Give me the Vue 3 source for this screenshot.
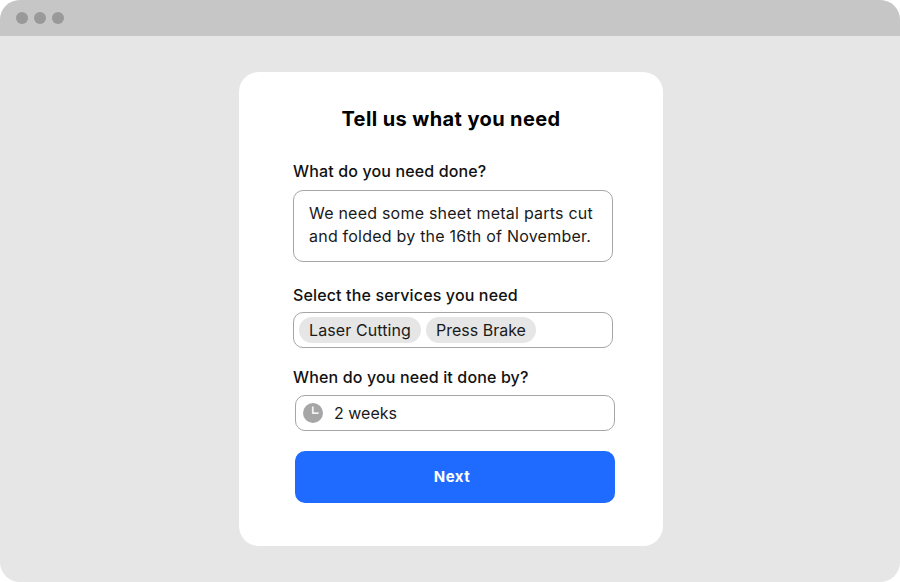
<script setup>
const chips = ['Laser Cutting', 'Press Brake']
</script>

<template>
  <div class="window">
    <header class="bar">
      <span class="dot"></span><span class="dot"></span><span class="dot"></span>
    </header>
    <main class="stage">
      <section class="card">
        <h1 class="title">Tell us what you need</h1>
        <label class="label first">What do you need done?</label>
        <div class="box area">We need some sheet metal parts cut<br />and folded by the 16th of November.</div>
        <label class="label second">Select the services you need</label>
        <div class="box chips">
          <span v-for="c in chips" :key="c" class="chip">{{ c }}</span>
        </div>
        <label class="label third">When do you need it done by?</label>
        <div class="box when">
          <svg class="clock" width="20" height="20" viewBox="0 0 20 20">
            <circle cx="10" cy="10" r="10" fill="#a6a6a6" />
            <path d="M9.8 3.5V10.2H15.6" fill="none" stroke="#f2f2f2" stroke-width="1.8" />
          </svg>
          <span>2 weeks</span>
        </div>
        <button class="next">Next</button>
      </section>
    </main>
  </div>
</template>

<style>
html, body { margin: 0; background: #fff; }
</style>

<style scoped>
.window {
  width: 900px;
  height: 582px;
  border-radius: 20px;
  overflow: hidden;
  background: #e6e6e6;
  font-family: Inter, "Liberation Sans", sans-serif;
  color: #1a1a1a;
}
.bar {
  height: 36px;
  background: #c6c6c6;
  display: flex;
  align-items: center;
  gap: 6px;
  padding-left: 16px;
  box-sizing: border-box;
}
.dot { width: 12px; height: 12px; border-radius: 50%; background: #999; }
.stage { display: flex; padding: 36px 0 0 239px; }
.card {
  width: 424px;
  height: 474px;
  box-sizing: border-box;
  background: #fff;
  border-radius: 20px;
  padding: 34px 0 0 54px;
}
.title {
  margin: 0 0 0 -54px;
  width: 424px;
  text-align: center;
  font-size: 20px;
  line-height: 26px;
  font-weight: 700;
  letter-spacing: 0.4px;
  color: #000;
}
.label {
  display: block;
  font-size: 16px;
  line-height: 20px;
  font-weight: 500;
  letter-spacing: 0.14px;
  color: #111;
}
.first { margin-top: 29px; margin-bottom: 9px; }
.second { margin-top: 23px; margin-bottom: 7px; }
.third { margin-top: 19px; margin-bottom: 8px; }
.box {
  width: 320px;
  box-sizing: border-box;
  border: 1px solid #a6a6a6;
  background: #fff;
  font-size: 16px;
}
.area {
  height: 72px;
  border-radius: 10px;
  padding: 11px 15px;
  line-height: 23px;
  letter-spacing: 0.22px;
}
.chips {
  height: 36px;
  border-radius: 10px;
  display: flex;
  align-items: center;
  gap: 4px;
  padding-left: 5px;
}
.chip {
  height: 26px;
  line-height: 26px;
  border-radius: 13px;
  background: #e6e6e6;
  padding: 0 10px;
  letter-spacing: 0.1px;
}
.chip + .chip { margin-left: 1px; letter-spacing: 0; }
.when {
  height: 36px;
  margin-left: 2px;
  border-radius: 10px;
  display: flex;
  align-items: center;
  gap: 11px;
  padding-left: 7px;
}
.clock { flex: none; }
.next {
  display: block;
  width: 320px;
  height: 52px;
  margin: 20px 0 0 2px;
  padding: 0 6px 2px 0;
  border: 0;
  border-radius: 10px;
  background: #1f6bff;
  color: #fff;
  font-family: inherit;
  font-size: 15px;
  font-weight: 700;
  letter-spacing: 0.5px;
}
</style>
